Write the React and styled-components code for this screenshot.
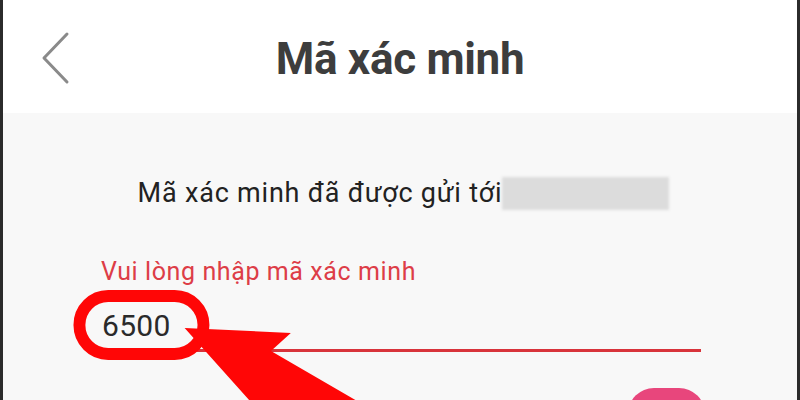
import React from 'react';
import styled, { createGlobalStyle } from 'styled-components';

const GlobalStyle = createGlobalStyle`
    html, body {
        margin: 0;
        padding: 0;
        background: #ffffff;
    }
    body {
        font-family: Roboto, "Noto Sans", "Liberation Sans", sans-serif;
    }
`;

function App() {
    return (
    <Frame>
        <GlobalStyle />
        <Header>
            <BackButton aria-label="Quay lại">
                <svg width="32" height="54" viewBox="0 0 32 54">
                    <polyline points="27,3 4,27 27,51" fill="none" stroke="#8a8a8a" strokeWidth="3" strokeLinecap="round" strokeLinejoin="round" />
                </svg>
            </BackButton>
            <Title>Mã xác minh</Title>
            <div />
        </Header>

        <Body>
            <SentLine>
                <span>Mã xác minh đã được gửi tới</span>
                <Masked />
            </SentLine>

            <Field>
                <Label>Vui lòng nhập mã xác minh</Label>
                <Value>6500</Value>
                <Underline />
            </Field>

            <ButtonRow>
                <NextButton />
            </ButtonRow>
        </Body>

        <Annotation viewBox="0 0 800 400" preserveAspectRatio="none">
            <rect x="77" y="296" width="125" height="58" rx="29" fill="none" stroke="#ff0606" strokeWidth="12" />
            <polygon points="183,328 290,333 270,351 480,472 440,540 285,420 275,430" fill="#ff0606" />
        </Annotation>
    </Frame>
    )
}

export default App;

const Frame = styled.div`
    position: relative;
    width: 800px;
    height: 400px;
    box-sizing: border-box;
    border-left: 3px solid #2b2b2b;
    border-right: 3px solid #2b2b2b;
    overflow: hidden;
    background: #f8f8f8;
`;

const Header = styled.header`
    height: 113px;
    background: #ffffff;
    display: grid;
    grid-template-columns: 1fr auto 1fr;
    align-items: center;
    padding: 0 37px;
    box-sizing: border-box;
`;

const BackButton = styled.button`
    border: 0;
    background: none;
    padding: 0;
    margin-top: 3px;
    width: 32px;
    height: 54px;
    display: flex;
    justify-self: start;
`;

const Title = styled.h1`
    margin: 4px 0 0 0;
    font-size: 44px;
    font-weight: 700;
    color: #3d3d3d;
    letter-spacing: -0.3px;
`;

const Body = styled.main`
    padding: 63px 92px 0 95px;
    display: flex;
    flex-direction: column;
`;

const SentLine = styled.div`
    display: flex;
    justify-content: center;
    align-items: center;
    font-size: 27px;
    line-height: 34px;
    letter-spacing: 0.8px;
    color: #222222;
    margin-left: 4px;
`;

const Masked = styled.div`
    width: 167px;
    height: 33px;
    background: #dcdcdc;
    filter: blur(1.5px);
`;

const Field = styled.div`
    display: flex;
    flex-direction: column;
    margin-top: 48px;
    margin-right: 4px;
`;

const Label = styled.div`
    font-size: 25px;
    line-height: 28px;
    letter-spacing: 0.6px;
    color: #dd3d47;
    margin-left: 3px;
`;

const Value = styled.div`
    margin-top: 22px;
    margin-left: 4px;
    font-size: 30px;
    line-height: 36px;
    font-weight: 400;
    letter-spacing: 0.3px;
    color: #2a2a2a;
`;

const Underline = styled.div`
    height: 3px;
    margin-top: 5px;
    background: #d8333b;
`;

const ButtonRow = styled.div`
    display: flex;
    justify-content: flex-end;
    margin-top: 36px;
`;

const NextButton = styled.button`
    width: 77px;
    height: 60px;
    border: 0;
    border-radius: 26px;
    background: #e8467c;
`;

const Annotation = styled.svg`
    position: absolute;
    inset: 0;
    width: 100%;
    height: 100%;
    pointer-events: none;
`;
